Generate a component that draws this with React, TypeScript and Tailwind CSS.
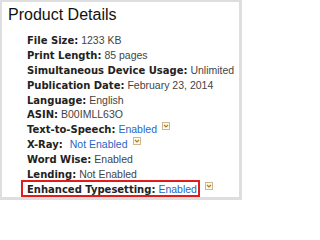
const Drop = () => (
  <svg width="8" height="8" viewBox="0 0 8 8" className="inline-block ml-[5px] align-[3px]">
    <rect x="0.5" y="0.5" width="7" height="7" fill="#fdf8ec" stroke="#c9b98c" />
    <path d="M2 3 L4 5 L6 3" fill="none" stroke="#b07a1c" strokeWidth="1.2" />
  </svg>
);

const rows: { label: string; value: string; link?: boolean; drop?: boolean; gap?: boolean; box?: boolean }[] = [
  { label: 'File Size:', value: '1233 KB' },
  { label: 'Print Length:', value: '85 pages' },
  { label: 'Simultaneous Device Usage:', value: 'Unlimited' },
  { label: 'Publication Date:', value: 'February 23, 2014' },
  { label: 'Language:', value: 'English' },
  { label: 'ASIN:', value: 'B00IMLL63O' },
  { label: 'Text-to-Speech:', value: 'Enabled', link: true, drop: true },
  { label: 'X-Ray:', value: 'Not Enabled', link: true, drop: true, gap: true },
  { label: 'Word Wise:', value: 'Enabled' },
  { label: 'Lending:', value: 'Not Enabled' },
  { label: 'Enhanced Typesetting:', value: 'Enabled', link: true, drop: true, box: true },
];

export default function App() {
  return (
    <div className="w-[242px] h-[200px] bg-[#dedede] pt-[2px] pl-[2px] pr-[3px] pb-[3px] overflow-hidden">
      <div className="h-full bg-white pl-[6px] pt-[3px]">
        <h2 className="text-[16px] leading-[20px] text-[#111] font-['Liberation_Sans',Arial,sans-serif]">Product Details</h2>
        <ul className="mt-[6px] pl-[19px] whitespace-nowrap">
          {rows.map((r) => (
            <li key={r.label} className="h-[14.9px] leading-[14.9px]">
              <span
                className={
                  r.box
                    ? 'inline-block leading-[11px] border-2 border-[#e21b1b] -ml-[6px] pl-[4px] pr-[1px]'
                    : 'inline'
                }
              >
                <b className="font-['DejaVu_Sans',Verdana,sans-serif] font-bold text-[#222] text-[10px]">{r.label}</b>
                <span
                  className={`font-['Liberation_Sans',Arial,sans-serif] text-[10.5px] ${r.gap ? 'ml-[7px]' : 'ml-[3px]'} ${r.link ? 'text-[#2a66c4]' : 'text-[#444]'}`}
                >
                  {r.value}
                </span>
              </span>
              {r.drop && <Drop />}
            </li>
          ))}
        </ul>
      </div>
    </div>
  );
}
